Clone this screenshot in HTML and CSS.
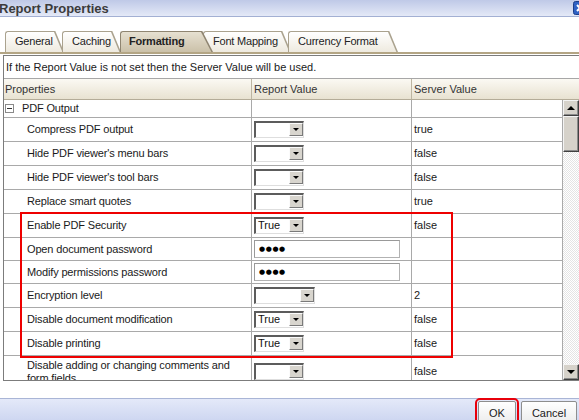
FILE: index.html
```html
<!DOCTYPE html>
<html>
<head>
<meta charset="utf-8">
<title>Report Properties</title>
<link rel="stylesheet" href="styles.css">
</head>
<body>
<div class="titlebar">
  <span class="title">Report Properties</span>
  <span class="close"><svg width="14" height="14" viewBox="0 0 14 14"><rect x="0.5" y="0.5" width="13" height="13" rx="2" fill="#2f62c4" stroke="#1d3f8a"/><path d="M4 4 L10 10 M10 4 L4 10" stroke="#fff" stroke-width="2"/></svg></span>
</div>
<div class="tabs">
  <div class="tab t-general"><span class="tl">General</span></div>
  <div class="tab t-caching"><span class="tl">Caching</span></div>
  <div class="tab active t-format"><span class="tl">Formatting</span></div>
  <div class="tab t-font"><span class="tl">Font Mapping</span></div>
  <div class="tab t-currency"><span class="tl">Currency Format</span></div>
</div>
<div class="panel">
  <div class="info">If the Report Value is not set then the Server Value will be used.</div>
  <div class="head">
    <div class="hc">Properties</div>
    <div class="hc">Report Value</div>
    <div class="hc last">Server Value</div>
  </div>
  <div class="body">
    <div class="rows">
      <div class="row group"><div class="cell c1"><span class="minus"></span>PDF Output</div><div class="cell c2"></div><div class="cell c3"></div></div>
      <div class="row"><div class="cell c1">Compress PDF output</div><div class="cell c2"><div class="sel"><span class="v"></span><span class="b"></span></div></div><div class="cell c3">true</div></div>
      <div class="row"><div class="cell c1">Hide PDF viewer's menu bars</div><div class="cell c2"><div class="sel"><span class="v"></span><span class="b"></span></div></div><div class="cell c3">false</div></div>
      <div class="row"><div class="cell c1">Hide PDF viewer's tool bars</div><div class="cell c2"><div class="sel"><span class="v"></span><span class="b"></span></div></div><div class="cell c3">false</div></div>
      <div class="row"><div class="cell c1">Replace smart quotes</div><div class="cell c2"><div class="sel"><span class="v"></span><span class="b"></span></div></div><div class="cell c3">true</div></div>
      <div class="row"><div class="cell c1">Enable PDF Security</div><div class="cell c2"><div class="sel"><span class="v">True</span><span class="b"></span></div></div><div class="cell c3">false</div></div>
      <div class="row short"><div class="cell c1">Open document password</div><div class="cell c2"><div class="pwd">●●●●</div></div><div class="cell c3"></div></div>
      <div class="row short"><div class="cell c1">Modify permissions password</div><div class="cell c2"><div class="pwd">●●●●</div></div><div class="cell c3"></div></div>
      <div class="row"><div class="cell c1">Encryption level</div><div class="cell c2"><div class="sel wide"><span class="v"></span><span class="b"></span></div></div><div class="cell c3">2</div></div>
      <div class="row"><div class="cell c1">Disable document modification</div><div class="cell c2"><div class="sel"><span class="v">True</span><span class="b"></span></div></div><div class="cell c3">false</div></div>
      <div class="row"><div class="cell c1">Disable printing</div><div class="cell c2"><div class="sel"><span class="v">True</span><span class="b"></span></div></div><div class="cell c3">false</div></div>
      <div class="row tall"><div class="cell c1">Disable adding or changing comments and<br>form fields</div><div class="cell c2"><div class="sel"><span class="v"></span><span class="b"></span></div></div><div class="cell c3">false</div></div>
    </div>
    <div class="scrollbar">
      <div class="sb-btn up"><span class="arr-up"></span></div>
      <div class="thumb"></div>
      <div class="track"></div>
      <div class="sb-btn down"><span class="arr-down"></span></div>
    </div>
  </div>
</div>
<div class="footer">
  <button class="btn ok">OK</button>
  <button class="btn cancel">Cancel</button>
</div>
<div class="highlight"></div>
</body>
</html>
```
FILE: styles.css
```css
* { box-sizing: border-box; }
html, body { margin: 0; padding: 0; background: #fff; }
body {
  width: 579px;
  height: 420px;
  overflow: hidden;
  position: relative;
  font-family: "Liberation Sans", Arial, sans-serif;
  font-size: 11px;
  color: #1a1a1a;
}

.titlebar {
  height: 17px;
  display: flex;
  justify-content: space-between;
  align-items: center;
  background: linear-gradient(#bfc9e7, #e4e9f7);
  border-bottom: 1px solid #a3b0d3;
  overflow: hidden;
}
.title {
  font-weight: bold;
  font-size: 13px;
  color: #3b3b3b;
  margin-left: -1px;
}
.close { display: flex; margin-right: -8px; }

.tabs {
  display: flex;
  align-items: flex-end;
  height: 23px;
  margin-top: 14px;
  padding-left: 5px;
  border-bottom: 2px solid #b3a584;
}
.tab {
  position: relative;
  height: 21px;
  line-height: 19px;
  padding-left: 9px;
  border: 1px solid #aaa28e;
  border-right: 0;
  border-bottom: 0;
  border-radius: 3px 0 0 0;
  background: linear-gradient(#ffffff, #eeeadf);
  color: #222;
  white-space: nowrap;
  z-index: 1;
}
.tl {
  position: relative;
  z-index: 2;
  letter-spacing: -0.2px;
}
.tab::before, .tab::after {
  content: "";
  position: absolute;
  top: -1px;
  left: 100%;
  width: 10px;
  height: 21px;
}
.tab::before {
  background: #aaa28e;
  clip-path: polygon(0 0, 1.3px 0, 100% 100%, 0 100%);
}
.tab::after {
  background: linear-gradient(#ffffff, #eeeadf);
  clip-path: polygon(0 1px, 0 100%, calc(100% - 1.6px) 100%);
}
.tab.active {
  background: linear-gradient(#e6e0d1, #cbc1a9);
  border-color: #8f8571;
  font-weight: bold;
  padding-left: 8px;
  z-index: 3;
}
.tab.active::before, .tab.active::after { width: 12px; }
.tab.active::before { background: #8f8571; }
.tab.active::after { background: linear-gradient(#e6e0d1, #cbc1a9); }

.t-general { width: 49px; margin-right: 8px; }
.t-caching { width: 49px; margin-right: 9px; }
.t-format { width: 81px; margin-right: 2px; }
.t-font { width: 78px; margin-right: 7px; }
.t-currency { width: 100px; }

.panel {
  margin-top: 1px;
  margin-left: 3px;
  border-left: 1px solid #7c7c7c;
  border-top: 1px solid #7c7c7c;
  border-bottom: 1px solid #7c7c7c;
}
.info {
  height: 23px;
  line-height: 22px;
  padding-left: 2px;
  border-bottom: 1px solid #a7a7a7;
  color: #1a1a1a;
}
.head {
  display: grid;
  grid-template-columns: 248px 160px 1fr;
  height: 21px;
  border-bottom: 1px solid #b4ac98;
  background: linear-gradient(#fbf9f3, #e8e2d1);
}
.hc {
  line-height: 20px;
  padding-left: 2px;
  border-right: 1px solid #bdb5a1;
  color: #333;
}
.hc:first-child { padding-left: 1px; }
.hc.last { border-right: 0; }

.body {
  display: flex;
  height: 280px;
  overflow: hidden;
}
.rows { width: 559px; }
.row {
  display: grid;
  grid-template-columns: 248px 160px 151px;
  height: 24px;
  border-bottom: 1px solid #a9a9a9;
}
.row.group { height: 18px; }
.row.short { height: 23px; }
.row.tall { height: 32px; }
.cell {
  display: flex;
  align-items: center;
  border-right: 1px solid #a9a9a9;
  padding-left: 2px;
  line-height: 13px;
}
.cell.c1 { padding-left: 23px; letter-spacing: -0.15px; }
.row.group .c1 { padding-left: 1px; }
.minus {
  width: 9px;
  height: 9px;
  border: 1px solid #8a8a8a;
  margin-right: 8px;
  background: #fff;
  display: flex;
  align-items: center;
  justify-content: center;
}
.minus::before {
  content: "";
  width: 5px;
  height: 1px;
  background: #333;
}

.sel {
  display: flex;
  justify-content: space-between;
  width: 50px;
  height: 17px;
  border-style: solid;
  border-width: 2px 1px 1px 2px;
  border-color: #5c5c5c #dedede #dedede #5c5c5c;
  background: #fff;
}
.sel.wide { width: 61px; }
.sel .v { padding-left: 2px; line-height: 13px; color: #111; }
.sel .b {
  width: 14px;
  margin: 0 0 1px 0;
  background: #d8d5ce;
  border: 1px solid;
  border-color: #fbfbfb #7a7a7a #7a7a7a #fbfbfb;
  display: flex;
  align-items: center;
  justify-content: center;
}
.sel .b::before {
  content: "";
  border-left: 3px solid transparent;
  border-right: 3px solid transparent;
  border-top: 3px solid #000;
}
.pwd {
  width: 146px;
  height: 18px;
  border: 1px solid #b2b2b2;
  border-top-color: #999;
  border-left-color: #999;
  padding-left: 4px;
  font-family: "DejaVu Sans", sans-serif;
  font-size: 7px;
  letter-spacing: 0.6px;
  line-height: 16px;
  color: #000;
}

.scrollbar {
  width: 16px;
  display: flex;
  flex-direction: column;
  background: repeating-conic-gradient(#e4e4e4 0 25%, #ffffff 0 50%) 0 0 / 2px 2px;
}
.sb-btn, .thumb {
  background: #d6d2ca;
  border: 1px solid;
  border-color: #f4f4f4 #404040 #404040 #f4f4f4;
  box-shadow: inset -1px -1px #8a8a8a;
}
.sb-btn {
  height: 16px;
  display: flex;
  align-items: center;
  justify-content: center;
}
.thumb { height: 36px; }
.track { flex: 1; }
.arr-up {
  border-left: 4px solid transparent;
  border-right: 4px solid transparent;
  border-bottom: 4px solid #000;
}
.arr-down {
  border-left: 4px solid transparent;
  border-right: 4px solid transparent;
  border-top: 4px solid #000;
}

.footer {
  margin-top: 17px;
  height: 24px;
  border-top: 1px solid #a9b5d6;
  background: linear-gradient(#e4e9f9, #ccd5f0);
  display: flex;
  justify-content: flex-end;
  align-items: flex-start;
  padding-right: 2px;
}
.btn {
  margin-top: 2px;
  height: 24px;
  padding: 0;
  font-family: "Liberation Sans", Arial, sans-serif;
  font-size: 11px;
  color: #1a1a1a;
  background: linear-gradient(#ffffff, #ebebeb);
  border: 1px solid #8e8e8e;
  border-radius: 2px;
}
.btn.ok {
  width: 38px;
  margin-right: 5px;
  outline: 2px solid #e8000b;
  outline-offset: 1px;
}
.btn.cancel { width: 56px; }

.highlight {
  position: absolute;
  left: 20px;
  top: 212px;
  width: 433px;
  height: 146px;
  border: 2px solid #ee0000;
  pointer-events: none;
}
```
